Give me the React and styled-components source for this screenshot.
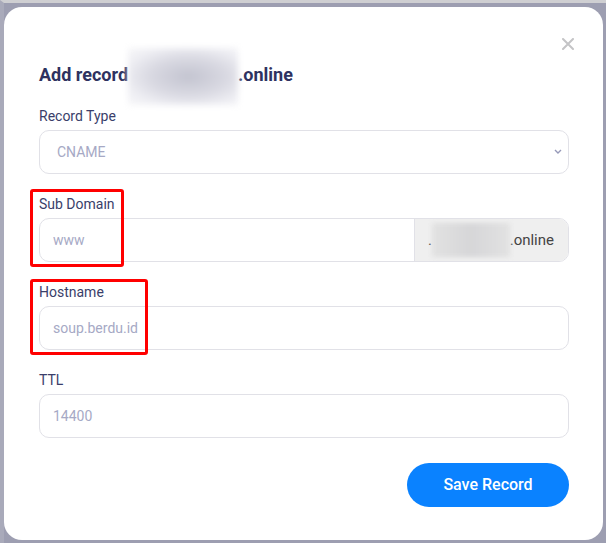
import styled, { createGlobalStyle } from 'styled-components';

const GlobalStyle = createGlobalStyle`
  * {
    box-sizing: border-box;
  }
  body {
    margin: 0;
    background: #9d9eb1;
    font-family: Roboto, 'Noto Sans', Arial, sans-serif;
  }
`;

const Backdrop = styled.div`
  width: 606px;
  height: 543px;
  overflow: hidden;
  background: #9d9eb1;
  border-top: 3px solid #cfcfd2;
  border-left: 4px solid #a9aaba;
  padding-top: 4px;
`;

const Modal = styled.div`
  position: relative;
  width: 599px;
  height: 533px;
  background: #fff;
  border-radius: 18px;
  padding: 30px 34px 33px 35px;
  display: flex;
  flex-direction: column;
`;

const Header = styled.div`
  display: flex;
  justify-content: space-between;
  align-items: flex-start;
  margin-bottom: 21px;
`;

const Title = styled.h4`
  margin: 28px 0 0;
  font-size: 18px;
  line-height: 20px;
  font-weight: 700;
  color: #2e3260;
  white-space: nowrap;
`;

const Blur = styled.span`
  display: inline-block;
  vertical-align: middle;
  width: ${(props) => props.w}px;
  height: ${(props) => props.h}px;
  margin: ${(props) => props.my}px 0;
  background: ${(props) =>
    props.soft
      ? 'linear-gradient(90deg, #e2e2e2 0%, #d6d6d8 50%, #e2e2e2 100%)'
      : 'radial-gradient(ellipse at 55% 50%, #c3c4d0 0%, #d9d9e2 45%, #eeeef3 75%, #f7f7f9 100%)'};
  filter: blur(${(props) => (props.soft ? 2 : 3)}px);
`;

const Close = styled.button`
  border: 0;
  background: none;
  padding: 0;
  margin-right: -6px;
  width: 14px;
  height: 14px;
  display: flex;
  align-items: center;
  justify-content: center;
  cursor: pointer;
`;

const Form = styled.div`
  display: flex;
  flex-direction: column;
  gap: 22px;
`;

const Field = styled.div`
  position: relative;
  display: flex;
  flex-direction: column;
`;

const Label = styled.label`
  font-size: 14px;
  line-height: 17px;
  color: #3a3e6a;
  margin-bottom: 5px;
`;

const Control = styled.div`
  position: relative;
  display: flex;
  height: 44px;
  border: 1px solid #e1e1e7;
  border-radius: 10px;
  overflow: hidden;
  background: #fff;
`;

const Input = styled.input`
  flex: 1;
  min-width: 0;
  border: 0;
  outline: none;
  padding: 0 13px;
  font-family: inherit;
  font-size: 14px;
  color: #3a3e6a;
  background: transparent;
  &::placeholder {
    color: #a6a9c5;
  }
`;

const SelectValue = styled.div`
  flex: 1;
  display: flex;
  align-items: center;
  padding: 0 17px;
  font-size: 14px;
  color: #a6a9c5;
`;

const Chevron = styled.div`
  display: flex;
  align-items: center;
  padding-right: 6px;
`;

const Addon = styled.div`
  width: 154px;
  display: flex;
  align-items: center;
  padding: 0 14px 0 13px;
  background: #efefef;
  border-left: 1px solid #e1e1e7;
  font-size: 15px;
  color: #444;
  white-space: nowrap;
`;

const Mark = styled.div`
  position: absolute;
  z-index: 2;
  left: -9px;
  top: ${(props) => props.top}px;
  width: ${(props) => props.w}px;
  height: ${(props) => props.h}px;
  border: 3px solid #ff0000;
  border-radius: 3px;
  pointer-events: none;
`;

const Footer = styled.div`
  display: flex;
  justify-content: flex-end;
  margin-top: 25px;
`;

const SaveButton = styled.button`
  width: 162px;
  height: 44px;
  border: 0;
  border-radius: 22px;
  background: #0a82ff;
  color: #fff;
  font-family: inherit;
  font-size: 16px;
  font-weight: 500;
  cursor: pointer;
`;

const App = () => {
  return (
    <Backdrop>
      <GlobalStyle />
      <Modal>
        <Header>
          <Title>
            Add record
            <Blur w={110} h={57} my={-18} />
            .online
          </Title>
          <Close aria-label="close">
            <svg width="12" height="12" viewBox="0 0 12 12">
              <path d="M1 1L11 11M11 1L1 11" stroke="#c4c4c6" strokeWidth="2" strokeLinecap="round" />
            </svg>
          </Close>
        </Header>

        <Form>
          <Field>
            <Label>Record Type</Label>
            <Control>
              <SelectValue>CNAME</SelectValue>
              <Chevron>
                <svg width="8" height="5" viewBox="0 0 8 5">
                  <path d="M1 1L4 4L7 1" fill="none" stroke="#9699b8" strokeWidth="1.4" />
                </svg>
              </Chevron>
            </Control>
          </Field>

          <Field>
            <Mark top={-7} w={94} h={78} />
            <Label>Sub Domain</Label>
            <Control>
              <Input placeholder="www" />
              <Addon>
                .
                <Blur soft w={80} h={34} my={-8} />
                .online
              </Addon>
            </Control>
          </Field>

          <Field>
            <Mark top={-5} w={118} h={76} />
            <Label>Hostname</Label>
            <Control>
              <Input placeholder="soup.berdu.id" />
            </Control>
          </Field>

          <Field>
            <Label>TTL</Label>
            <Control>
              <Input placeholder="14400" />
            </Control>
          </Field>
        </Form>

        <Footer>
          <SaveButton>Save Record</SaveButton>
        </Footer>
      </Modal>
    </Backdrop>
  );
};

export default App;
